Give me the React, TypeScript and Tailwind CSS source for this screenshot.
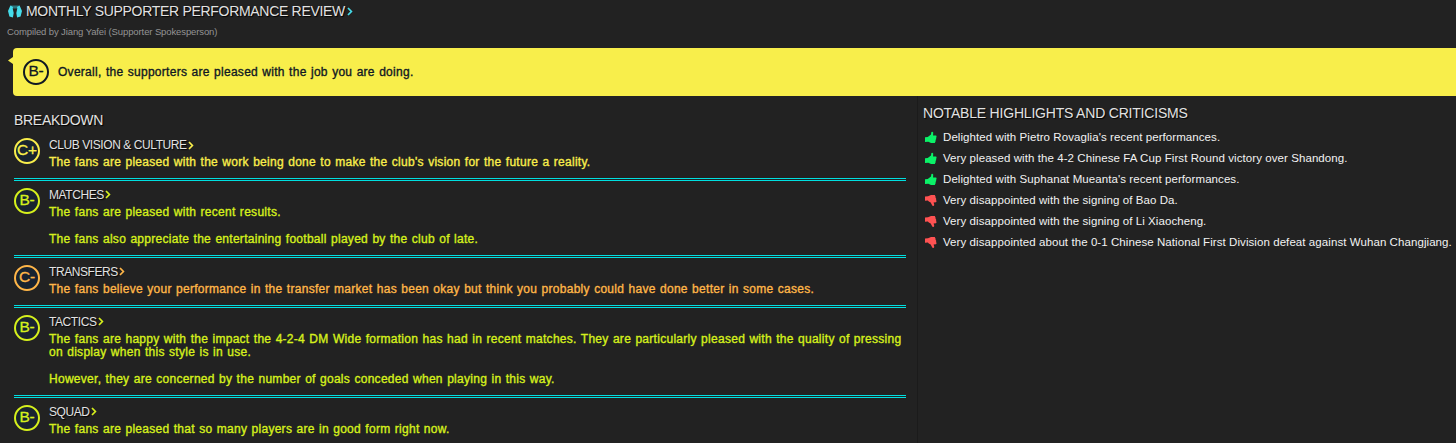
import { ReactNode } from "react"

type Section = {
  grade: string
  title: string
  ring: string
  text: string
  lines: string[]
}

const sections: Section[] = [
  {
    grade: "C+",
    title: "CLUB VISION & CULTURE",
    ring: "border-[#f9ee4b]",
    text: "text-[#f9ee4b]",
    lines: ["The fans are pleased with the work being done to make the club's vision for the future a reality."],
  },
  {
    grade: "B-",
    title: "MATCHES",
    ring: "border-[#d6f01c]",
    text: "text-[#d6f01c]",
    lines: ["The fans are pleased with recent results.", "", "The fans also appreciate the entertaining football played by the club of late."],
  },
  {
    grade: "C-",
    title: "TRANSFERS",
    ring: "border-[#ffb648]",
    text: "text-[#ffb648]",
    lines: ["The fans believe your performance in the transfer market has been okay but think you probably could have done better in some cases."],
  },
  {
    grade: "B-",
    title: "TACTICS",
    ring: "border-[#d6f01c]",
    text: "text-[#d6f01c]",
    lines: [
      "The fans are happy with the impact the 4-2-4 DM Wide formation has had in recent matches. They are particularly pleased with the quality of pressing",
      "on display when this style is in use.",
      "",
      "However, they are concerned by the number of goals conceded when playing in this way.",
    ],
  },
  {
    grade: "B-",
    title: "SQUAD",
    ring: "border-[#d6f01c]",
    text: "text-[#d6f01c]",
    lines: ["The fans are pleased that so many players are in good form right now."],
  },
]

const highlights = [
  { good: true, text: "Delighted with Pietro Rovaglia's recent performances." },
  { good: true, text: "Very pleased with the 4-2 Chinese FA Cup First Round victory over Shandong." },
  { good: true, text: "Delighted with Suphanat Mueanta's recent performances." },
  { good: false, text: "Very disappointed with the signing of Bao Da." },
  { good: false, text: "Very disappointed with the signing of Li Xiaocheng." },
  { good: false, text: "Very disappointed about the 0-1 Chinese National First Division defeat against Wuhan Changjiang." },
]

const ScarfIcon = () => (
  <svg width="14" height="13" viewBox="0 0 14 13" className="shrink-0">
    <path d="M2.6.4h8.8l.6 3H2z" fill="#2b747d" />
    <path d="M2.4.6 0 6l1.4 5.6 3.5.9.8-4.6-1-4.5L5 2z" fill="#45dcea" />
    <path d="M11.6.6 14 6l-1.4 5.6-3.5.9-.8-4.6 1-4.5L9 2z" fill="#45dcea" />
  </svg>
)

const Chevron = ({ className }: { className: string }) => (
  <svg width="6" height="9" viewBox="0 0 6 9" className={`shrink-0 ${className}`}>
    <path d="M1 1l3.4 3.5L1 8" fill="none" stroke="currentColor" strokeWidth="1.7" />
  </svg>
)

const ThumbUp = () => (
  <svg width="12" height="13" viewBox="0 0 12 13" className="shrink-0 text-[#0bf168]">
    <path
      d="M0 6.3 2.7 6 3.7 5.2 6 3.6 6.4 1 7.4.7 8.2 1.6 8.1 4.4 11.2 4.5 11.6 5.7 11.1 6.9 11.2 8.1 10.6 9.1 10.6 10.3 9.8 11.9 6 12 3.3 10.8 0 11z"
      fill="currentColor"
    />
  </svg>
)

const ThumbDown = () => (
  <svg width="12" height="13" viewBox="0 0 12 13" className="shrink-0 text-[#ff5252]">
    <path
      d="M0 2.6 3 2.3 6 .9 9.8 1 10.5 2.5 10.6 3.7 11.2 4.8 11.1 6 11.6 7.2 11 8.3 8.6 8.4 9.3 10.9 8.6 12 7.4 11.8 5.7 8.6 3.8 7.4 2.9 6.6 0 6.8z"
      fill="currentColor"
    />
  </svg>
)

const Grade = ({ children, className }: { children: ReactNode; className: string }) => (
  <div
    className={`flex size-[26px] shrink-0 items-center justify-center rounded-full border-2 pb-[2px] text-[15.5px] leading-none tracking-[-0.2px] [-webkit-text-stroke:0.3px] ${className}`}
  >
    {children}
  </div>
)

const Heading = ({ children, className }: { children: ReactNode; className: string }) => (
  <h2 className={`whitespace-nowrap text-[#e2e2e2] [text-shadow:1px_1px_1px_#000] ${className}`}>{children}</h2>
)

export default function App() {
  return (
    <div className="h-[443px] w-[1456px] overflow-hidden bg-[#222222] font-['Liberation_Sans',Arial,sans-serif]">
      <header className="h-12">
        <div className="flex h-[22px] items-center pl-2">
          <ScarfIcon />
          <Heading className="ml-1 text-[14px] tracking-[-0.3px]">MONTHLY SUPPORTER PERFORMANCE REVIEW</Heading>
          <Chevron className="ml-0.5 text-[#45dcea]" />
        </div>
        <p className="pl-[7px] text-[9.5px] leading-[19px] tracking-[-0.11px] text-[#949494]">Compiled by Jiang Yafei (Supporter Spokesperson)</p>
      </header>

      <div className="relative ml-[13px] flex h-12 items-center rounded-l-[4px] bg-[#f8ee4b] pl-[10px] text-[#101823]">
        <span className="absolute top-[9px] -left-[5px] h-[7px] w-[5px] bg-[#f8ee4b] [clip-path:polygon(0_50%,100%_0,100%_100%)]" />
        <Grade className="border-[#101823]">B-</Grade>
        <p className="ml-[9px] text-[12px] leading-4 tracking-[0.28px] [word-spacing:0.7px] [-webkit-text-stroke:0.35px]">
          Overall, the supporters are pleased with the job you are doing.
        </p>
      </div>

      <div className="flex">
        <main className="ml-[14px] w-[892px] shrink-0 pt-[15px]">
          <Heading className="h-[27px] text-[14px] leading-[18px] tracking-[-0.3px]">BREAKDOWN</Heading>
          {sections.map((s, i) => (
            <section
              key={s.title}
              className={`mb-[7px] flex pb-[8.6px] ${i < sections.length - 1 ? "border-b-3 border-double border-[#00dfe0]" : ""}`}
            >
              <Grade className={`bg-[#182330] ${s.ring} ${s.text}`}>{s.grade}</Grade>
              <div className={`ml-[9px] ${s.text}`}>
                <div className="flex h-[18px] items-center pb-[4px]">
                  <Heading className="text-[12px] leading-[14px] tracking-[-0.42px]">{s.title}</Heading>
                  <Chevron className="ml-px" />
                </div>
                {s.lines.map((line, n) => (
                  <p
                    key={n}
                    className="h-[13.4px] whitespace-nowrap text-[12px] leading-[13.4px] tracking-[0.28px] [word-spacing:0.7px] [-webkit-text-stroke:0.35px]"
                  >
                    {line}
                  </p>
                ))}
              </div>
            </section>
          ))}
        </main>

        <aside className="ml-[11px] h-[347px] border-l border-[#1b1b1b] pt-[8px] pl-[5px]">
          <Heading className="h-[23px] text-[14px] leading-[18px] tracking-[-0.2px]">NOTABLE HIGHLIGHTS AND CRITICISMS</Heading>
          <ul>
            {highlights.map((h) => (
              <li key={h.text} className="flex h-[21px] items-center pl-[2px]">
                {h.good ? <ThumbUp /> : <ThumbDown />}
                <span className="ml-[6px] whitespace-nowrap text-[11.5px] tracking-[0.075px] text-[#f2f2f2]">{h.text}</span>
              </li>
            ))}
          </ul>
        </aside>
      </div>
    </div>
  )
}
